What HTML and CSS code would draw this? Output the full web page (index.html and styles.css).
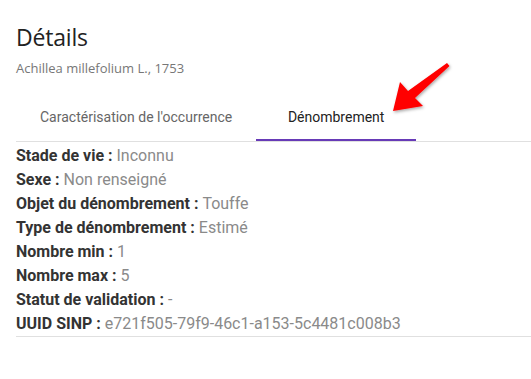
FILE: index.html
```html
<!DOCTYPE html>
<html lang="fr">
<head>
<meta charset="utf-8">
<link rel="stylesheet" href="styles.css">
</head>
<body>
<div class="page">
  <h1 class="title">Détails</h1>
  <div class="subtitle">Achillea millefolium L., 1753</div>
  <div class="tabs">
    <div class="tab">Caractérisation de l'occurrence</div>
    <div class="tab active">Dénombrement</div>
  </div>
  <div class="fields">
    <div class="field"><span class="label">Stade de vie : </span><span class="value">Inconnu</span></div>
    <div class="field"><span class="label">Sexe : </span><span class="value">Non renseigné</span></div>
    <div class="field"><span class="label">Objet du dénombrement : </span><span class="value">Touffe</span></div>
    <div class="field"><span class="label">Type de dénombrement : </span><span class="value">Estimé</span></div>
    <div class="field"><span class="label">Nombre min : </span><span class="value">1</span></div>
    <div class="field"><span class="label">Nombre max : </span><span class="value">5</span></div>
    <div class="field"><span class="label">Statut de validation : </span><span class="value">-</span></div>
    <div class="field"><span class="label">UUID SINP : </span><span class="value">e721f505-79f9-46c1-a153-5c4481c008b3</span></div>
  </div>
  <svg class="arrow" width="72" height="60" viewBox="0 0 72 60">
    <defs>
      <filter id="sh" x="-30%" y="-30%" width="160%" height="160%">
        <feDropShadow dx="1" dy="1.5" stdDeviation="1.5" flood-color="#000" flood-opacity="0.35"/>
      </filter>
    </defs>
    <path d="M61 3 L63.5 6 L29 38 L37 46 L7 51 L14 22 L22 31 Z" fill="#f00" filter="url(#sh)"/>
  </svg>
</div>
</body>
</html>
```

FILE: styles.css
```css
html, body {
  margin: 0;
  padding: 0;
  background: #fff;
}
.page {
  position: relative;
  padding: 21px 0 0 16px;
  font-family: Roboto, "Liberation Sans", sans-serif;
}
.title {
  margin: 0;
  font-family: "Open Sans", "Noto Sans", sans-serif;
  font-weight: 400;
  font-size: 23px;
  line-height: 32px;
  color: #222;
  letter-spacing: -0.2px;
}
.subtitle {
  margin-top: 6px;
  font-family: "Open Sans", "Noto Sans", sans-serif;
  font-size: 13px;
  line-height: 18px;
  color: #777;
}
.tabs {
  display: flex;
  margin-top: 16px;
  border-bottom: 1px solid #e0e0e0;
}
.tab {
  height: 48px;
  box-sizing: border-box;
  padding: 0 24px;
  min-width: 160px;
  display: flex;
  align-items: center;
  justify-content: center;
  font-size: 14px;
  color: #666;
}
.tab.active {
  color: #222;
  border-bottom: 2px solid #673ab7;
  padding-top: 2px;
}
.fields {
  padding-top: 2px;
  border-bottom: 1px solid #e0e0e0;
}
.field {
  font-size: 16px;
  line-height: 24px;
}
.label {
  font-weight: 700;
  color: #333;
}
.value {
  color: #8a8a8a;
}
.arrow {
  position: absolute;
  left: 386px;
  top: 60px;
}
```
